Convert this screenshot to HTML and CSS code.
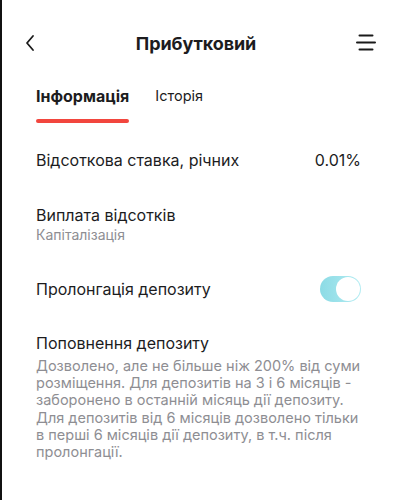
FILE: index.html
```html
<!DOCTYPE html>
<html lang="uk">
<head>
<meta charset="utf-8">
<link rel="stylesheet" href="styles.css">
</head>
<body>
<div class="screen">
  <header class="topbar">
    <svg class="back" width="12" height="18" viewBox="0 0 12 18"><path d="M9 2 L3 9 L9 16" fill="none" stroke="#1a1a1a" stroke-width="1.8" stroke-linecap="round" stroke-linejoin="round"/></svg>
    <h1 class="title">Прибутковий</h1>
    <svg class="menu" width="20" height="18" viewBox="0 0 20 18"><path d="M3.5 1.5 H16.5 M1 8.5 H19 M3.5 15.5 H16.5" stroke="#1a1a1a" stroke-width="2" stroke-linecap="round"/></svg>
  </header>
  <nav class="tabs">
    <div class="tab active">Інформація<span class="bar"></span></div>
    <div class="tab">Історія</div>
  </nav>
  <section class="row row-rate">
    <span class="label">Відсоткова ставка, річних</span>
    <span class="value">0.01%</span>
  </section>
  <section class="row-block row-pay">
    <div class="label">Виплата відсотків</div>
    <div class="sub">Капіталізація</div>
  </section>
  <section class="row row-prolong">
    <span class="label">Пролонгація депозиту</span>
    <span class="toggle"><span class="knob"></span></span>
  </section>
  <section class="row-block row-topup">
    <div class="label">Поповнення депозиту</div>
    <p class="desc">Дозволено, але не більше ніж 200% від суми розміщення. Для депозитів на 3 і 6 місяців - заборонено в останній місяць дії депозиту. Для депозитів від 6 місяців дозволено тільки в перші 6 місяців дії депозиту, в т.ч. після пролонгації.</p>
  </section>
</div>
</body>
</html>
```
FILE: styles.css
```css
* { box-sizing: border-box; }
html, body { margin: 0; padding: 0; background: #fff; }
body {
  font-family: Inter, "Noto Sans", sans-serif;
  color: #1c1c1e;
  border-left: 2px solid #111;
  min-height: 500px;
}
.screen { padding: 0 33px 0 34px; }
.topbar {
  margin-top: 15px;
  height: 56px;
  display: flex;
  align-items: center;
  justify-content: space-between;
}
.back { margin-left: -12px; }
.title { margin: 0; font-size: 18px; font-weight: 700; letter-spacing: -0.1px; }
.menu { margin-right: -15px; }
.tabs {
  display: flex;
  gap: 26px;
  align-items: flex-start;
  padding-top: 14px;
  height: 52px;
}
.tab { font-size: 14.5px; line-height: 22px; color: #1c1c1e; position: relative; }
.tab.active { font-size: 16px; font-weight: 700; display: flex; flex-direction: column; }
.bar { display: block; height: 4px; border-radius: 2px; background: #f2463e; margin-top: 12px; }
.label { font-size: 16px; line-height: 22px; }
.row { display: flex; justify-content: space-between; align-items: center; }
.row-rate { margin-top: 26px; height: 22px; }
.value { font-size: 16px; }
.row-block { display: flex; flex-direction: column; }
.row-pay { margin-top: 33px; }
.sub { font-size: 14px; line-height: 18px; color: #8e8e93; }
.row-prolong { margin-top: 32px; height: 26px; }
.toggle {
  width: 41px; height: 26px; border-radius: 13px;
  background: linear-gradient(90deg, #8cdbe5, #b3ecf2);
  display: flex; justify-content: flex-end; padding: 1px;
}
.knob { width: 24px; height: 24px; border-radius: 50%; background: #fff; }
.row-topup { margin-top: 30px; }
.desc { margin: 3px 0 0; font-size: 14.5px; line-height: 17.2px; color: #8e8e93; }
```
